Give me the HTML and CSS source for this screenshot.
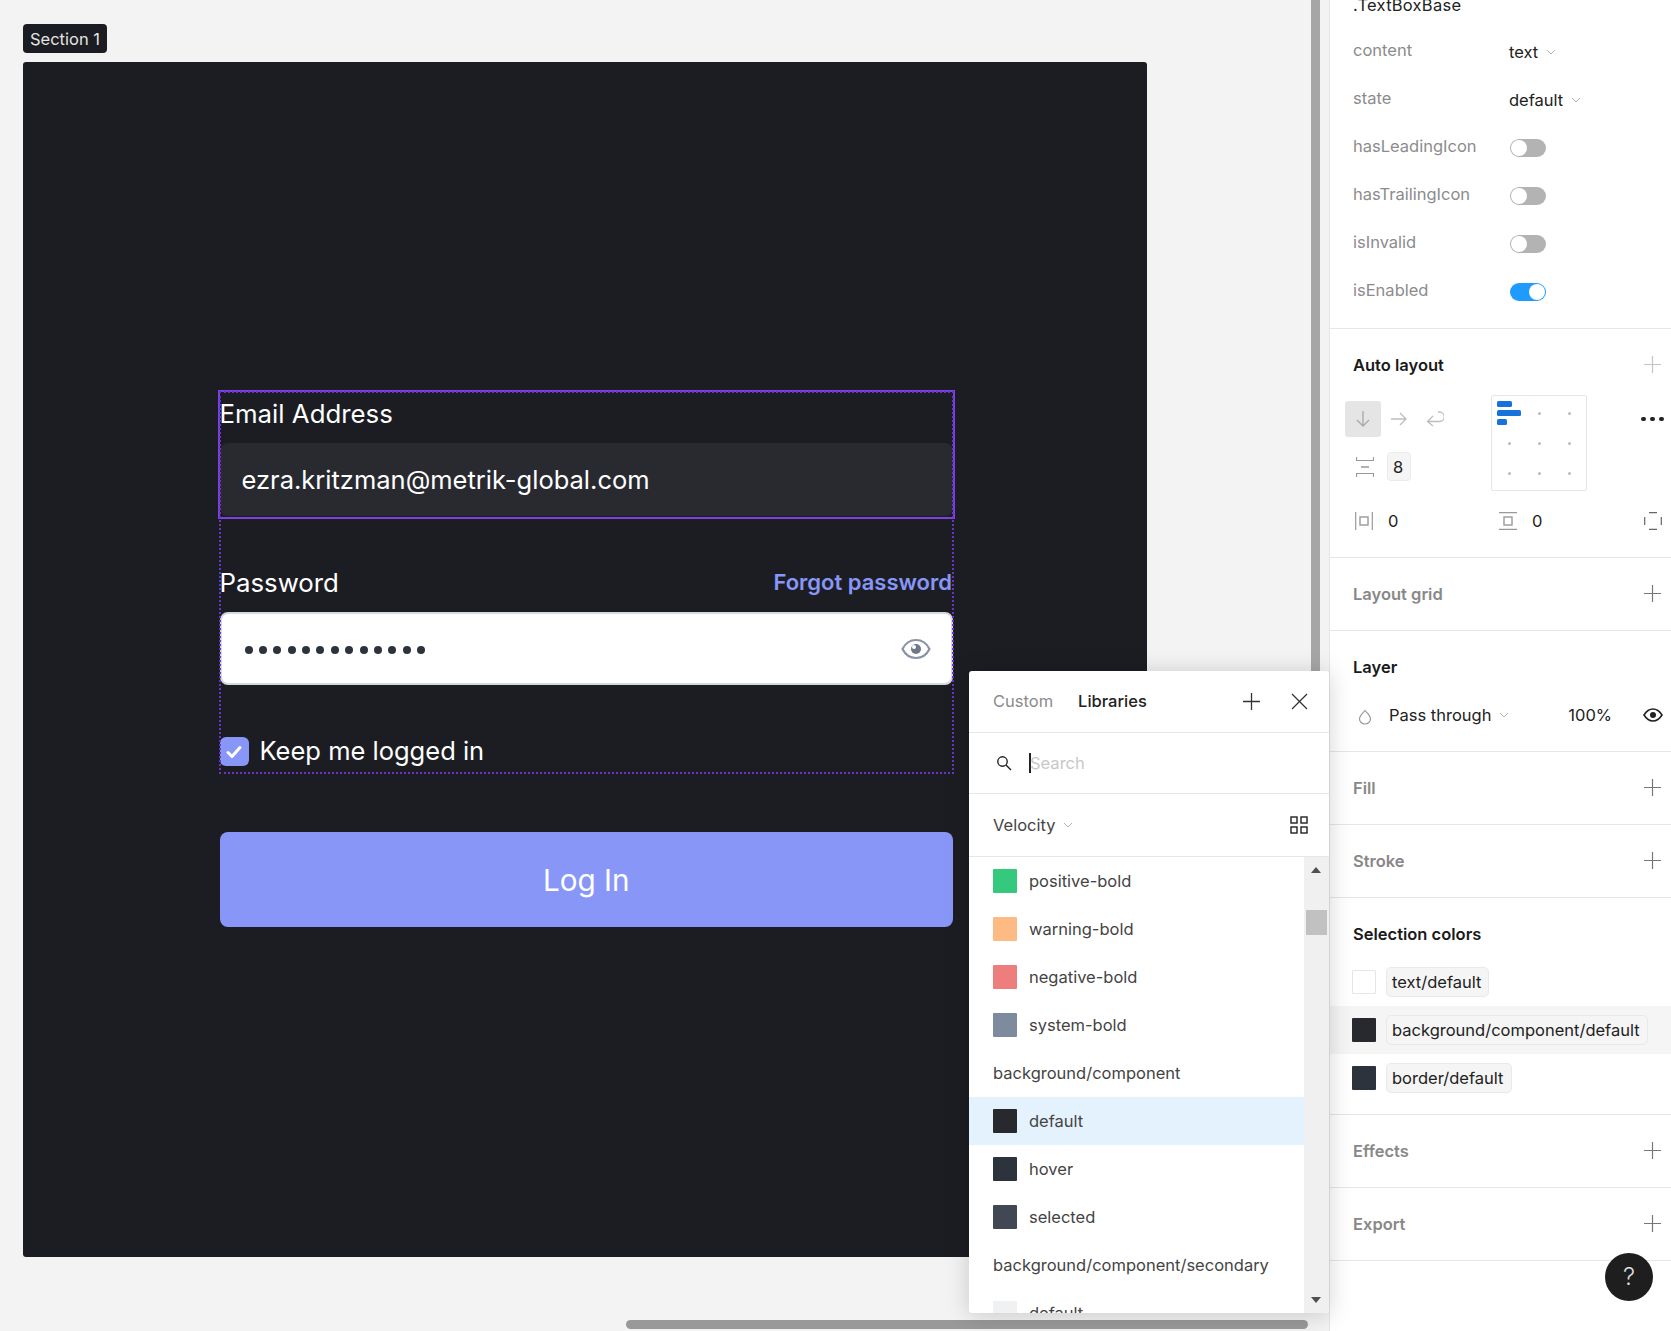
FILE: index.html
```html
<!DOCTYPE html>
<html lang="en">
  <head>
    <meta charset="UTF-8" />
    <title>Section 1</title>
    <link rel="stylesheet" href="styles.css">
  </head>
  <body>
    <div class="app">
      <!-- canvas -->
      <div class="canvas">
        <div class="section-label">Section 1</div>
        <div class="frame">
          <div class="form">
            <div class="field field-selected">
              <div class="field-label">Email Address</div>
              <div class="textbox textbox-dark">ezra.kritzman@metrik-global.com</div>
            </div>
            <div class="field field-password">
              <div class="field-label">
                <span>Password</span>
                <span class="forgot">Forgot password</span>
              </div>
              <div class="textbox textbox-light">
                <span class="dots">
                  <i></i><i></i><i></i><i></i><i></i><i></i><i></i><i></i><i></i><i></i><i></i><i></i><i></i>
                </span>
                <svg class="eye-big" width="30" height="22" viewBox="0 0 30 22" fill="none">
                  <path d="M1.5 11C4.5 5 9.5 2 15 2s10.500 3 13.500 9c-3 6-8 9-13.500 9S4.500 17 1.500 11z" stroke="#8a93a5" stroke-width="2.200" />
                  <circle cx="15" cy="11" r="5" fill="#6f7889" />
                  <circle cx="13" cy="9" r="2" fill="#fff" />
                </svg>
              </div>
            </div>
            <div class="keep">
              <span class="checkbox">
                <svg width="16" height="14" viewBox="0 0 16 14" fill="none">
                  <path d="M2 7.500l4 4 8-9" stroke="#fff" stroke-width="3" stroke-linecap="round" stroke-linejoin="round" />
                </svg>
              </span>
              <span class="keep-text">Keep me logged in</span>
            </div>
          </div>
          <div class="login-btn">Log In</div>
        </div>
        <div class="scroll-v"></div>
        <div class="scroll-h"></div>
      </div>

      <!-- right panel -->
      <div class="panel">
        <div class="panel-section props">
          <div class="props-title">.TextBoxBase</div>
          <div class="prop"><span class="prop-name">content</span><span class="prop-value">text<svg class="chev" width="10" height="6" viewBox="0 0 10 6"><path d="M1 1l4 4 4-4" fill="none" stroke="#b3b3b3" /></svg></span></div>
          <div class="prop"><span class="prop-name">state</span><span class="prop-value">default<svg class="chev" width="10" height="6" viewBox="0 0 10 6"><path d="M1 1l4 4 4-4" fill="none" stroke="#b3b3b3" /></svg></span></div>
          <div class="prop"><span class="prop-name">hasLeadingIcon</span><span class="toggle"></span></div>
          <div class="prop"><span class="prop-name">hasTrailingIcon</span><span class="toggle"></span></div>
          <div class="prop"><span class="prop-name">isInvalid</span><span class="toggle"></span></div>
          <div class="prop"><span class="prop-name">isEnabled</span><span class="toggle toggle-on"></span></div>
        </div>

        <div class="panel-section autolayout">
          <div class="section-head">
            <span class="head-title">Auto layout</span>
            <svg class="plus" width="17" height="17" viewBox="0 0 17 17"><path d="M8.500 0v17M0 8.500h17" stroke="#c4c4c4" stroke-width="1.200" /></svg>
          </div>
          <div class="al-top">
            <div class="al-controls">
              <div class="al-dirs">
                <span class="dir dir-active">
                  <svg width="16" height="18" viewBox="0 0 16 18" fill="none"><path d="M8 1v15M2 10l6 6 6-6" stroke="#a8a8a8" stroke-width="1.300" /></svg>
                </span>
                <span class="dir">
                  <svg width="18" height="14" viewBox="0 0 18 14" fill="none"><path d="M1 7h15M10 1l6 6-6 6" stroke="#bdbdbd" stroke-width="1.300" /></svg>
                </span>
                <span class="dir">
                  <svg width="18" height="16" viewBox="0 0 18 16" fill="none"><path d="M12 1h1.500a3.500 3.500 0 0 1 0 9.500H2M7 5l-5.500 5.500L7 15" stroke="#bdbdbd" stroke-width="1.300" /></svg>
                </span>
              </div>
              <div class="al-gap">
                <svg width="18" height="20" viewBox="0 0 18 20" fill="none"><path d="M.5 0v3.500h17V0M.5 20v-3.500h17V20" stroke="#999" stroke-width="1.200" /><path d="M5 10h8" stroke="#999" stroke-width="1.500" /></svg>
                <span class="gap-input">8</span>
              </div>
            </div>
            <div class="align-box">
              <span class="bar bar-1"></span>
              <span class="bar bar-2"></span>
              <span class="bar bar-3"></span>
              <i class="dot dot-1"></i><i class="dot dot-2"></i><i class="dot dot-3"></i><i class="dot dot-4"></i>
              <i class="dot dot-5"></i><i class="dot dot-6"></i><i class="dot dot-7"></i><i class="dot dot-8"></i>
            </div>
            <div class="more"><i></i><i></i><i></i></div>
          </div>
          <div class="al-padding">
            <div class="pad-cell">
              <svg width="18" height="18" viewBox="0 0 18 18" fill="none"><path d="M.7 0v18M17.300 0v18" stroke="#999" stroke-width="1.200" /><rect x="5" y="5" width="8" height="8" stroke="#999" stroke-width="1.400" /></svg>
              <span>0</span>
            </div>
            <div class="pad-cell pad-cell-2">
              <svg width="18" height="18" viewBox="0 0 18 18" fill="none"><path d="M0 .7h18M0 17.300h18" stroke="#999" stroke-width="1.200" /><rect x="5" y="5" width="8" height="8" stroke="#999" stroke-width="1.400" /></svg>
              <span>0</span>
            </div>
            <svg width="18" height="18" viewBox="0 0 18 18" fill="none"><path d="M5 .7h8M5 17.300h8M.7 5v8M17.300 5v8" stroke="#666" stroke-width="1.200" /></svg>
          </div>
        </div>

        <div class="panel-section">
          <div class="section-head">
            <span class="head-title head-muted">Layout grid</span>
            <svg class="plus" width="17" height="17" viewBox="0 0 17 17"><path d="M8.500 0v17M0 8.500h17" stroke="#777" stroke-width="1.200" /></svg>
          </div>
        </div>

        <div class="panel-section layer">
          <div class="section-head"><span class="head-title">Layer</span></div>
          <div class="layer-row">
            <svg class="drop" width="14" height="16" viewBox="0 0 14 16" fill="none"><path d="M7 1.500C5 4 1.500 6.500 1.500 10a5.500 5 0 0 0 11 0C12.500 6.500 9 4 7 1.500z" stroke="#999" stroke-width="1.200" /></svg>
            <span>Pass through</span>
            <svg class="chev" width="10" height="6" viewBox="0 0 10 6"><path d="M1 1l4 4 4-4" fill="none" stroke="#b3b3b3" /></svg>
            <span class="opacity">100%</span>
            <svg width="20" height="14" viewBox="0 0 20 14" fill="none"><path d="M1 7c2.500-4 5.500-6 9-6s6.500 2 9 6c-2.500 4-5.500 6-9 6S3.500 11 1 7z" stroke="#222" stroke-width="1.600" /><circle cx="10" cy="7" r="3" fill="#222" /></svg>
          </div>
        </div>

        <div class="panel-section">
          <div class="section-head">
            <span class="head-title head-muted">Fill</span>
            <svg class="plus" width="17" height="17" viewBox="0 0 17 17"><path d="M8.500 0v17M0 8.500h17" stroke="#777" stroke-width="1.200" /></svg>
          </div>
        </div>

        <div class="panel-section">
          <div class="section-head">
            <span class="head-title head-muted">Stroke</span>
            <svg class="plus" width="17" height="17" viewBox="0 0 17 17"><path d="M8.500 0v17M0 8.500h17" stroke="#777" stroke-width="1.200" /></svg>
          </div>
        </div>

        <div class="panel-section selection">
          <div class="section-head"><span class="head-title">Selection colors</span></div>
          <div class="sel-row"><span class="sel-swatch sel-white"></span><span class="pill">text/default</span></div>
          <div class="sel-row sel-row-hover"><span class="sel-swatch sw-default"></span><span class="pill">background/component/default</span></div>
          <div class="sel-row"><span class="sel-swatch sw-hover"></span><span class="pill">border/default</span></div>
        </div>

        <div class="panel-section">
          <div class="section-head">
            <span class="head-title head-muted">Effects</span>
            <svg class="plus" width="17" height="17" viewBox="0 0 17 17"><path d="M8.500 0v17M0 8.500h17" stroke="#777" stroke-width="1.200" /></svg>
          </div>
        </div>

        <div class="panel-section">
          <div class="section-head">
            <span class="head-title head-muted">Export</span>
            <svg class="plus" width="17" height="17" viewBox="0 0 17 17"><path d="M8.500 0v17M0 8.500h17" stroke="#777" stroke-width="1.200" /></svg>
          </div>
        </div>
      </div>

      <!-- color picker popover -->
      <div class="popover">
        <div class="pop-head">
          <span class="tab">Custom</span>
          <span class="tab tab-active">Libraries</span>
          <svg class="pop-plus" width="17" height="17" viewBox="0 0 17 17"><path d="M8.500 0v17M0 8.500h17" stroke="#333" stroke-width="1.300" /></svg>
          <svg class="pop-close" width="17" height="17" viewBox="0 0 17 17"><path d="M1 1l15 15M16 1L1 16" stroke="#333" stroke-width="1.300" /></svg>
        </div>
        <div class="pop-search">
          <svg width="16" height="16" viewBox="0 0 16 16" fill="none"><circle cx="6.500" cy="6.500" r="4.700" stroke="#222" stroke-width="1.400" /><path d="M10 10l5 5" stroke="#222" stroke-width="1.400" /></svg>
          <span class="caret"></span>
          <span class="placeholder">Search</span>
        </div>
        <div class="pop-lib">
          <span>Velocity</span>
          <svg class="chev" width="10" height="6" viewBox="0 0 10 6"><path d="M1 1l4 4 4-4" fill="none" stroke="#b3b3b3" /></svg>
          <svg class="grid-icon" width="18" height="18" viewBox="0 0 18 18" fill="none">
            <rect x="1" y="1" width="6" height="6" stroke="#222" stroke-width="1.400" />
            <rect x="11" y="1" width="6" height="6" stroke="#222" stroke-width="1.400" />
            <rect x="1" y="11" width="6" height="6" stroke="#222" stroke-width="1.400" />
            <rect x="11" y="11" width="6" height="6" stroke="#222" stroke-width="1.400" />
          </svg>
        </div>
        <div class="pop-body">
          <div class="pop-list">
            <div class="color-row"><span class="swatch sw-positive"></span>positive-bold</div>
            <div class="color-row"><span class="swatch sw-warning"></span>warning-bold</div>
            <div class="color-row"><span class="swatch sw-negative"></span>negative-bold</div>
            <div class="color-row"><span class="swatch sw-system"></span>system-bold</div>
            <div class="group-row">background/component</div>
            <div class="color-row color-row-active"><span class="swatch sw-default"></span>default</div>
            <div class="color-row"><span class="swatch sw-hover"></span>hover</div>
            <div class="color-row"><span class="swatch sw-selected"></span>selected</div>
            <div class="group-row">background/component/secondary</div>
            <div class="color-row"><span class="swatch sw-secondary"></span>default</div>
          </div>
          <div class="pop-scroll">
            <span class="arrow-up"></span>
            <span class="pop-thumb"></span>
            <span class="arrow-down"></span>
          </div>
        </div>
      </div>

      <div class="help">?</div>
    </div>
  </body>
</html>
```

FILE: styles.css
```css
html,
body {
  margin: 0;
  height: 100%;
  overflow: hidden;
}

body {
  font-family: "Inter", "Liberation Sans", sans-serif;
  font-size: 16.5px;
  color: #333;
}

.app {
  position: relative;
  display: flex;
  width: 1671px;
  height: 1331px;
  overflow: hidden;
}

/* canvas */
.canvas {
  position: relative;
  width: 1329px;
  flex-shrink: 0;
  box-sizing: border-box;
  padding: 24px 0 0 23px;
  background-color: #f3f3f3;
}

.section-label {
  width: 84px;
  height: 29px;
  line-height: 30px;
  text-align: center;
  background-color: #1c1d22;
  color: #e4e4e4;
  border-radius: 4px;
  margin-bottom: 9px;
}

.frame {
  width: 1124px;
  height: 1195px;
  box-sizing: border-box;
  padding: 330px 0 0 196.500px;
  background-color: #1c1d22;
  border-radius: 3px;
}

.form {
  width: 733.500px;
  height: 381px;
  box-sizing: border-box;
  outline: 2px dotted #6b35c4;
  outline-offset: -1px;
}

.field-selected {
  outline: 2px solid #7f3fe6;
  height: 125px;
}

.field-label {
  display: flex;
  justify-content: space-between;
  align-items: center;
  height: 43px;
  margin-bottom: 8px;
  color: #fff;
  font-size: 25.800px;
}

.forgot {
  font-size: 22px;
  font-weight: 600;
  color: #8896f8;
  margin-right: 1px;
}

.field-password {
  margin-top: 45px;
}

.field-password .field-label {
  height: 40px;
  padding-bottom: 2px;
}

.textbox {
  display: flex;
  align-items: center;
  height: 73px;
  box-sizing: border-box;
  border-radius: 8px;
  font-size: 25.500px;
}

.textbox-dark {
  padding-left: 22px;
  background-color: #282a2f;
  color: #fff;
}

.textbox-light {
  justify-content: space-between;
  padding: 0 20px 0 23px;
  background-color: #fff;
  border: 2px solid #d5d8de;
}

.dots {
  display: flex;
  gap: 6.400px;
  margin-top: 3px;
}

.dots i {
  width: 8px;
  height: 8px;
  border-radius: 50%;
  background-color: #2d333c;
}

.keep {
  display: flex;
  align-items: center;
  gap: 11px;
  margin-top: 52px;
  color: #fff;
  font-size: 25.500px;
  height: 29px;
}

.keep-text {
  margin-top: -2px;
}

.checkbox {
  display: flex;
  align-items: center;
  justify-content: center;
  width: 29px;
  height: 29px;
  border-radius: 6px;
  background-color: #8896f8;
}

.login-btn {
  width: 733.500px;
  height: 95px;
  margin-top: 59px;
  line-height: 97px;
  text-align: center;
  font-size: 29.700px;
  color: #fff;
  background-color: #8896f8;
  border-radius: 8px;
}

.scroll-v {
  position: absolute;
  top: 0;
  left: 1311px;
  width: 9px;
  height: 700px;
  background-color: #a6a6a6;
}

.scroll-h {
  position: absolute;
  top: 1320px;
  left: 626px;
  width: 682px;
  height: 9px;
  border-radius: 5px;
  background-color: #999;
}

/* right panel */
.panel {
  flex: 1;
  border-left: 1px solid #e6e6e6;
  background-color: #fff;
}

.panel-section {
  border-bottom: 1px solid #e6e6e6;
}

.props {
  display: flow-root;
  height: 329px;
  box-sizing: border-box;
  padding-left: 23px;
}

.props-title {
  height: 24px;
  line-height: 24px;
  margin-top: -7px;
  margin-bottom: 9px;
  color: #222;
  letter-spacing: 0.25px;
}

.prop {
  display: flex;
  align-items: center;
  height: 48px;
}

.prop-name {
  width: 156px;
  color: #8c8c8c;
}

.prop-value {
  display: flex;
  align-items: center;
  margin-top: 4px;
  color: #222;
}

.chev {
  margin-left: 8px;
}

.toggle {
  position: relative;
  width: 36px;
  height: 18px;
  margin-top: 4px;
  margin-left: 1px;
  border-radius: 9px;
  background-color: #b3b3b3;
}

.toggle::after {
  content: "";
  position: absolute;
  top: 1px;
  left: 1px;
  width: 16px;
  height: 16px;
  border-radius: 50%;
  background-color: #fff;
}

.toggle-on {
  background-color: #1f9bff;
}

.toggle-on::after {
  left: 19px;
}

.section-head {
  display: flex;
  align-items: center;
  justify-content: space-between;
  height: 72px;
  padding: 0 10px 0 23px;
}

.plus {
  margin-bottom: 2px;
}

.head-title {
  font-weight: 600;
  color: #1a1a1a;
}

.head-muted {
  color: #888;
}

.autolayout {
  height: 229px;
  box-sizing: border-box;
}

.al-top {
  display: flex;
  height: 90px;
  padding-left: 15px;
}

.al-controls {
  width: 146px;
}

.al-dirs {
  display: flex;
}

.dir {
  display: flex;
  align-items: center;
  justify-content: center;
  width: 36px;
  height: 36px;
  border-radius: 3px;
}

.dir-active {
  background-color: #e5e5e5;
}

.al-gap {
  display: flex;
  align-items: center;
  gap: 13px;
  margin-top: 15px;
  padding-left: 11px;
}

.gap-input {
  width: 24px;
  height: 29px;
  box-sizing: border-box;
  padding-right: 2px;
  line-height: 29px;
  text-align: center;
  background-color: #f5f5f5;
  border: 1px solid #ebebeb;
  border-radius: 4px;
  color: #222;
}

.align-box {
  position: relative;
  width: 96px;
  height: 96px;
  margin-top: -6px;
  box-sizing: border-box;
  border: 1px solid #e6e6e6;
  border-radius: 2px;
}

.bar {
  position: absolute;
  left: 5px;
  height: 6px;
  border-radius: 1.500px;
  background-color: #1673dc;
}

.bar-1 { top: 5px; width: 15px; }
.bar-2 { top: 14px; width: 24px; }
.bar-3 { top: 23px; width: 10px; }

.dot {
  position: absolute;
  width: 3px;
  height: 3px;
  border-radius: 50%;
  background-color: #bbb;
}

.dot-1 { left: 46px; top: 16px; }
.dot-2 { left: 76px; top: 16px; }
.dot-3 { left: 16px; top: 46px; }
.dot-4 { left: 46px; top: 46px; }
.dot-5 { left: 76px; top: 46px; }
.dot-6 { left: 16px; top: 76px; }
.dot-7 { left: 46px; top: 76px; }
.dot-8 { left: 76px; top: 76px; }

.more {
  display: flex;
  gap: 4.500px;
  height: 36px;
  align-items: center;
  margin-left: 54px;
}

.more i {
  width: 4.500px;
  height: 4.500px;
  border-radius: 50%;
  background-color: #222;
}

.al-padding {
  display: flex;
  align-items: center;
  height: 30px;
  margin-top: 15px;
  padding-left: 25px;
}

.pad-cell {
  display: flex;
  align-items: center;
  gap: 15px;
  width: 144px;
  color: #222;
}

.pad-cell-2 {
  width: 145px;
}

.layer {
  height: 121px;
  box-sizing: border-box;
}

.layer-row {
  display: flex;
  align-items: center;
  height: 48px;
  margin-top: -12px;
  padding: 0 8px 0 28px;
  color: #222;
}

.drop {
  margin-top: 3px;
  margin-right: 17px;
}

.opacity {
  margin-left: auto;
  margin-right: 31px;
}

.selection {
  height: 217px;
  box-sizing: border-box;
}

.selection .section-head {
  margin-bottom: -12px;
}

.sel-row {
  display: flex;
  align-items: center;
  gap: 10px;
  height: 48px;
  padding-left: 22px;
}

.sel-row-hover {
  background-color: #f5f5f5;
}

.sel-swatch {
  width: 24px;
  height: 24px;
  box-sizing: border-box;
  border-radius: 1px;
}

.sel-white {
  background-color: #fff;
  border: 1px solid #e6e6e6;
}

.pill {
  height: 30px;
  box-sizing: border-box;
  padding: 0 7px 0 5px;
  line-height: 28px;
  background-color: #f5f5f5;
  border: 1px solid #e9e9e9;
  border-radius: 5px;
  color: #222;
  white-space: nowrap;
}

.help {
  position: absolute;
  top: 1253px;
  left: 1605px;
  width: 48px;
  height: 48px;
  line-height: 48px;
  text-align: center;
  border-radius: 50%;
  background-color: #1e1e1e;
  color: #ddd;
  font-size: 24px;
  font-weight: 300;
}

/* color picker popover */
.popover {
  position: absolute;
  top: 671px;
  left: 969px;
  width: 360px;
  height: 642px;
  overflow: hidden;
  display: flex;
  flex-direction: column;
  background-color: #fff;
  border-radius: 3px;
  box-shadow: 0 2px 24px rgba(0, 0, 0, 0.18);
}

.pop-head {
  display: flex;
  align-items: center;
  height: 59px;
  flex-shrink: 0;
  padding: 0 0 2px 24px;
  border-bottom: 1px solid #e6e6e6;
}

.tab {
  margin-right: 25px;
  color: #8c8c8c;
}

.tab-active {
  font-weight: 500;
  color: #222;
}

.pop-plus {
  position: absolute;
  left: 274px;
  top: 22px;
}

.pop-close {
  position: absolute;
  left: 322px;
  top: 22px;
}

.pop-search {
  display: flex;
  align-items: center;
  height: 60px;
  flex-shrink: 0;
  padding-left: 27px;
  border-bottom: 1px solid #e6e6e6;
}

.caret {
  width: 2px;
  height: 20px;
  margin-left: 17px;
  background-color: #222;
}

.placeholder {
  margin-left: -1px;
  color: #c8c8c8;
}

.pop-lib {
  display: flex;
  align-items: center;
  height: 62px;
  flex-shrink: 0;
  padding: 0 21px 0 24px;
  border-bottom: 1px solid #e6e6e6;
  color: #444;
}

.grid-icon {
  margin-left: auto;
}

.pop-body {
  display: flex;
  flex: 1;
  min-height: 0;
}

.pop-list {
  flex: 1;
  overflow: hidden;
}

.color-row,
.group-row {
  display: flex;
  align-items: center;
  height: 48px;
  padding-left: 24px;
  color: #444;
}

.color-row-active {
  background-color: #e4f2fd;
}

.swatch {
  width: 24px;
  height: 24px;
  margin-right: 12px;
  border-radius: 1px;
}

.sw-positive { background-color: #34c97c; }
.sw-warning { background-color: #fdba82; }
.sw-negative { background-color: #ee7d7d; }
.sw-system { background-color: #7e8a9e; }
.sw-default { background-color: #27292f; }
.sw-hover { background-color: #2d333c; }
.sw-selected { background-color: #414854; }
.sw-secondary { background-color: #f0f1f3; }

.pop-scroll {
  position: relative;
  width: 25px;
  background-color: #f0f0f0;
}

.pop-thumb {
  position: absolute;
  left: 2px;
  top: 53px;
  width: 21px;
  height: 25px;
  background-color: #c1c1c1;
}

.arrow-up,
.arrow-down {
  position: absolute;
  left: 7px;
  border-left: 5.500px solid transparent;
  border-right: 5.500px solid transparent;
}

.arrow-up {
  top: 10px;
  border-bottom: 6px solid #505050;
}

.arrow-down {
  bottom: 10px;
  border-top: 6px solid #505050;
}
```
